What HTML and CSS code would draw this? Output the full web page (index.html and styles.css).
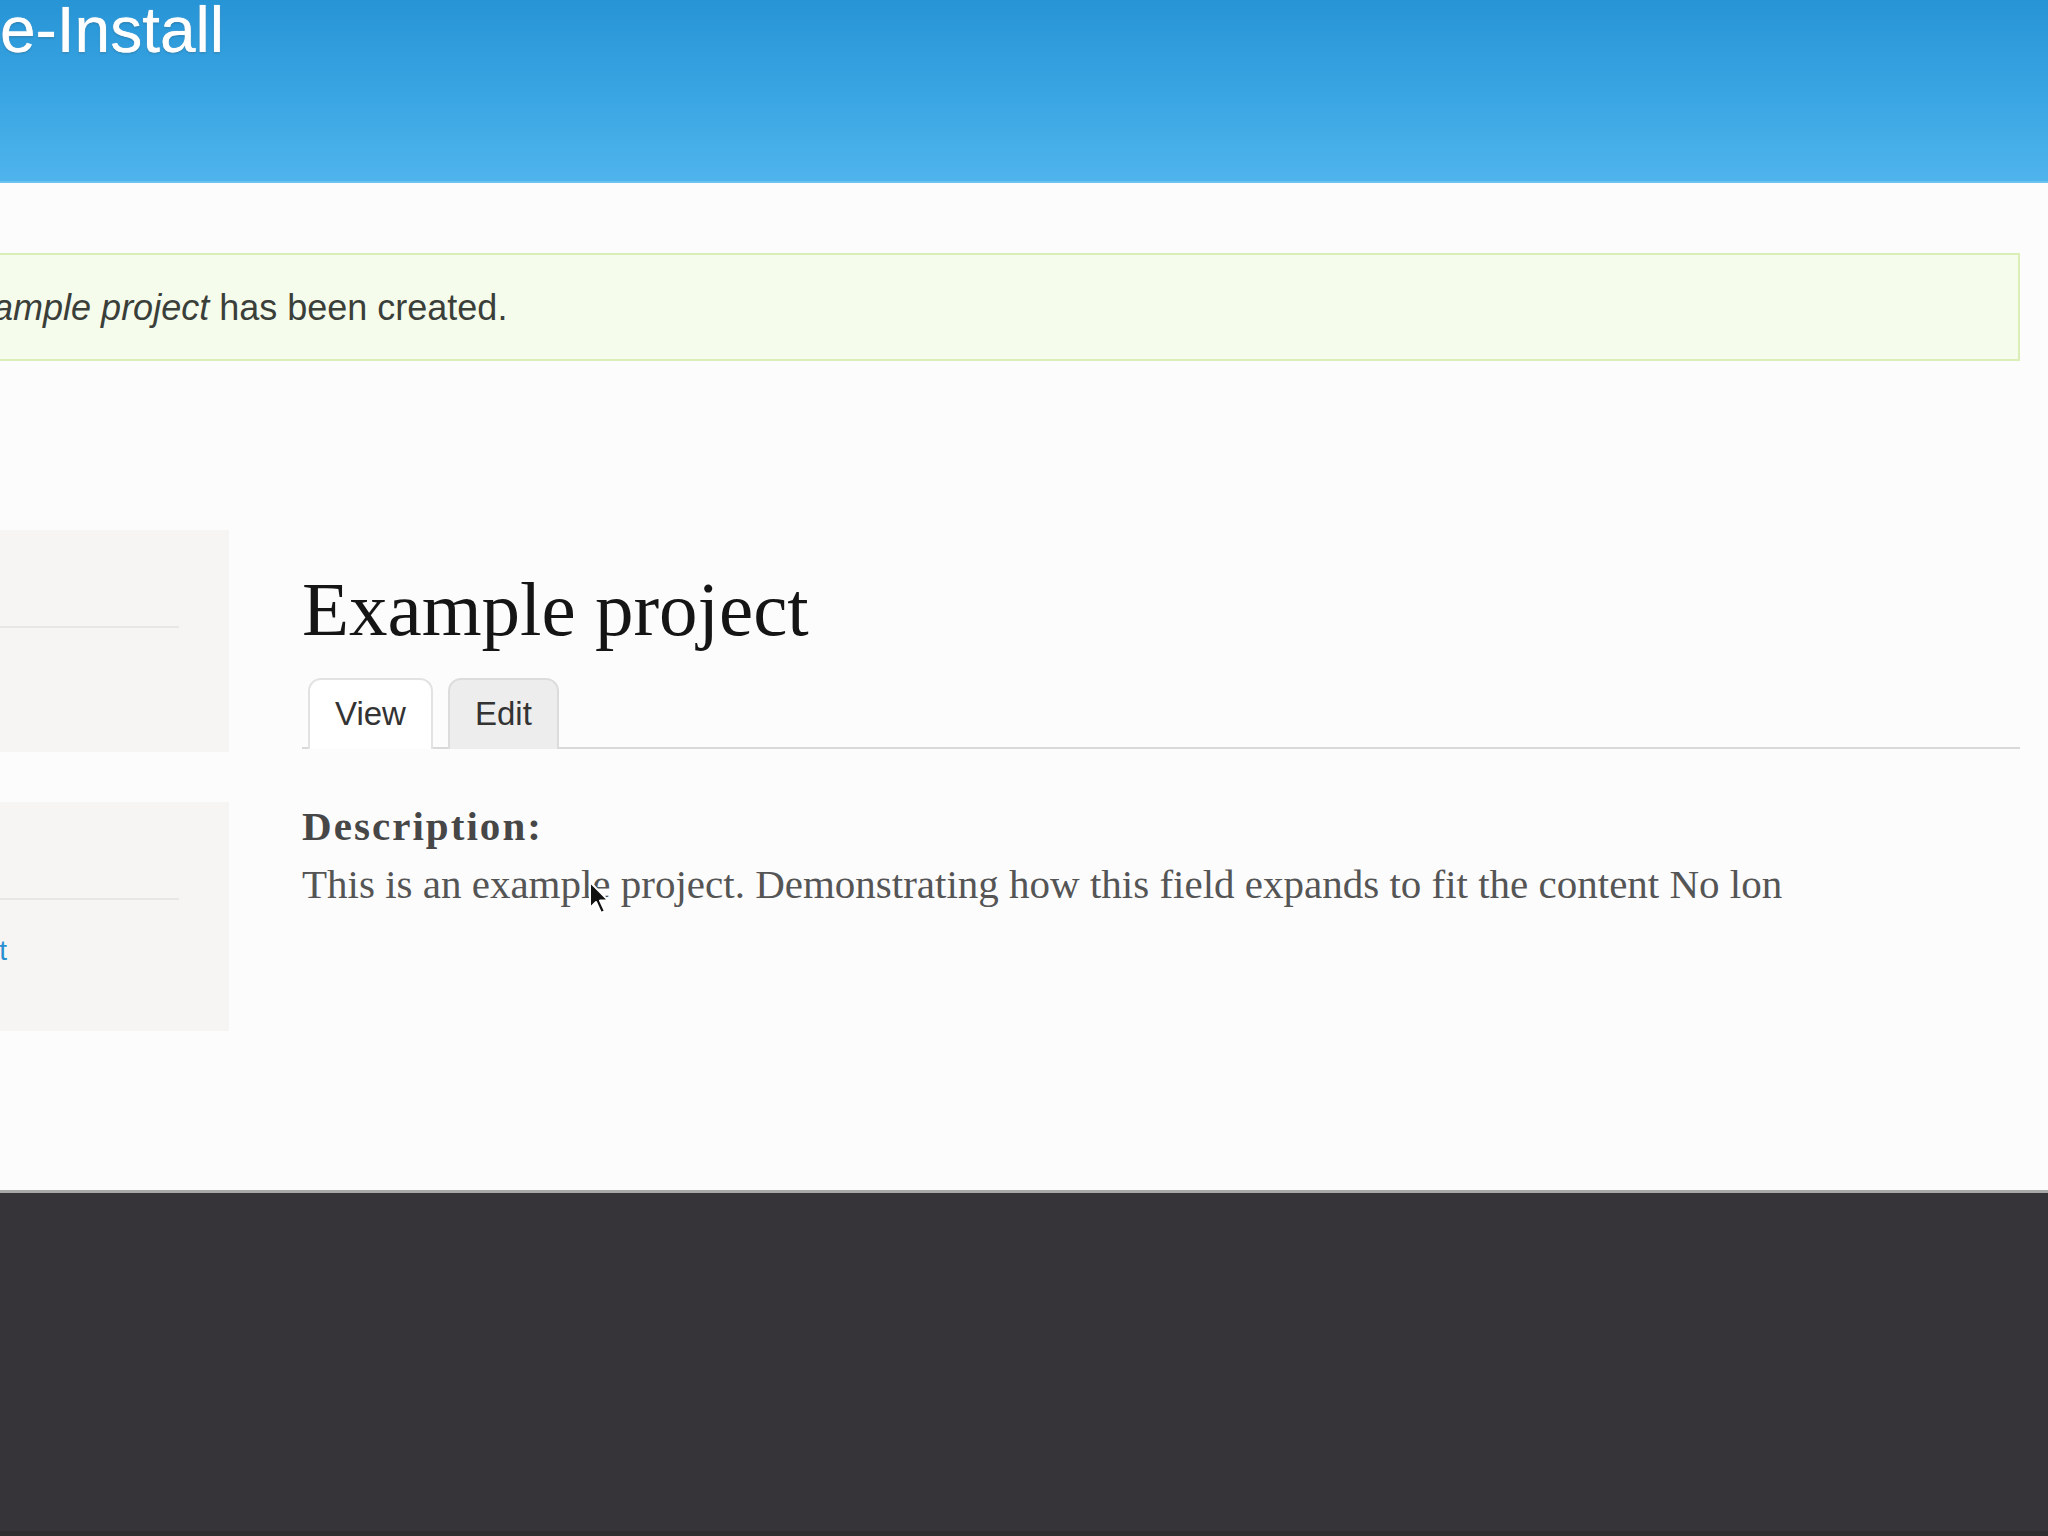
FILE: index.html
```html
<!DOCTYPE html>
<html lang="en">

<head>
    <meta charset="UTF-8">
    <title>Example project | Make-Install</title>
    <link rel="stylesheet" href="styles.css">
</head>

<body>
    <header class="site-header">
        <h1 class="site-name">Make-Install</h1>
    </header>

    <div class="page">
        <div class="messages status">
            Project <em>Example project</em> has been created.
        </div>

        <div class="layout">
            <aside class="sidebar">
                <div class="block block--nav">
                    <h2>Navigation</h2>
                    <ul>
                        <li><a href="#">Add content</a></li>
                    </ul>
                </div>
                <div class="block block--user">
                    <h2>admin</h2>
                    <ul>
                        <li><a href="#">Create new project</a></li>
                    </ul>
                </div>
            </aside>

            <main class="content">
                <h1 class="page-title">Example project</h1>
                <ul class="tabs">
                    <li class="tab tab--active"><a href="#">View</a></li>
                    <li class="tab"><a href="#">Edit</a></li>
                </ul>

                <div class="field">
                    <div class="field__label">Description:</div>
                    <div class="field__item">This is an example project. Demonstrating how this field expands to fit the content No lon</div>
                </div>
            </main>
        </div>
    </div>

    <footer class="site-footer"></footer>

    <!-- mouse pointer from the recording -->
    <svg class="pointer" width="24" height="36" viewBox="0 0 12 18">
        <path d="M1 1 L1 14 L4 11 L6.5 16.5 L8.5 15.6 L6 10.3 L10.2 10.3 Z" fill="#111" stroke="#fff" stroke-width="1" stroke-linejoin="round" />
    </svg>
</body>

</html>
```

FILE: styles.css
```css
*,
*::before,
*::after {
    box-sizing: border-box;
}

body {
    margin: 0;
    overflow: hidden;
    background: #fcfcfd;
    font-family: "Liberation Sans", Arial, sans-serif;
    color: #333;
}

a {
    text-decoration: none;
}

/* header */
.site-header {
    height: 183px;
    background: linear-gradient(to bottom, #2794d6 0%, #3aa6e3 55%, #4fb4ec 100%);
    border-bottom: 2px solid #6cc2f0;
    overflow: hidden;
}

.site-name {
    margin: -2px 0 0 -121px;
    font-size: 64px;
    line-height: 1;
    font-weight: normal;
    color: #fff;
    text-shadow: 0 0 1px #fff, 0 1px 2px rgba(0, 0, 0, 0.25);
}

/* page */
.page {
    height: 1007px;
    margin: 0 28px 0 -300px;
    padding-top: 70px;
}

.messages {
    padding: 31px 0 30px 127px;
    font-size: 36px;
    line-height: 1.2;
    color: #3b3f3a;
    background: #f6fcec;
    border: 2px solid #d9efb7;
}

.layout {
    display: grid;
    grid-template-columns: 529px 1fr;
    column-gap: 73px;
    margin-top: 169px;
}

/* sidebar blocks */
.block {
    background: #f6f5f3;
    padding: 28px 50px 0 72px;
}

.block--nav {
    min-height: 222px;
}

.block--user {
    min-height: 229px;
    margin-top: 50px;
}

.block h2 {
    margin: 0;
    padding-bottom: 32px;
    font-size: 30px;
    line-height: 36px;
    font-weight: normal;
    color: #666;
    border-bottom: 2px solid #e7e6e2;
}

.block ul {
    list-style: none;
    margin: 33px 0 0;
    padding: 0;
    font-size: 28px;
    line-height: 36px;
}

.block a {
    color: #2a8fd0;
}

/* content */
.page-title {
    margin: 33px 0 22px;
    font-family: Georgia, "Liberation Serif", serif;
    font-size: 77px;
    line-height: 1.2;
    font-weight: normal;
    color: #151515;
}

.tabs {
    display: flex;
    gap: 15px;
    list-style: none;
    margin: 0;
    padding: 0 0 0 6px;
    border-bottom: 2px solid #d9d9d9;
}

.tab a {
    display: block;
    margin-bottom: -2px;
    padding: 14px 25px 15px;
    font-size: 33px;
    line-height: 40px;
    color: #333;
    background: #ededed;
    border: 2px solid #dcdcdc;
    border-bottom: 0;
    border-radius: 13px 13px 0 0;
}

.tab--active a {
    background: #fff;
    border-color: #e2e2e2;
}

.field {
    margin-top: 48px;
    font-family: Georgia, "Liberation Serif", serif;
    font-size: 41px;
    line-height: 58px;
}

.field__label {
    font-weight: bold;
    letter-spacing: 0.05em;
    color: #474747;
}

.field__item {
    color: #555;
}

/* footer */
.site-footer {
    height: 346px;
    background: #363438;
    border-top: 3px solid #a8a8a8;
    border-bottom: 5px solid #2d2c2f;
}

.pointer {
    position: absolute;
    left: 588px;
    top: 880px;
}
```
